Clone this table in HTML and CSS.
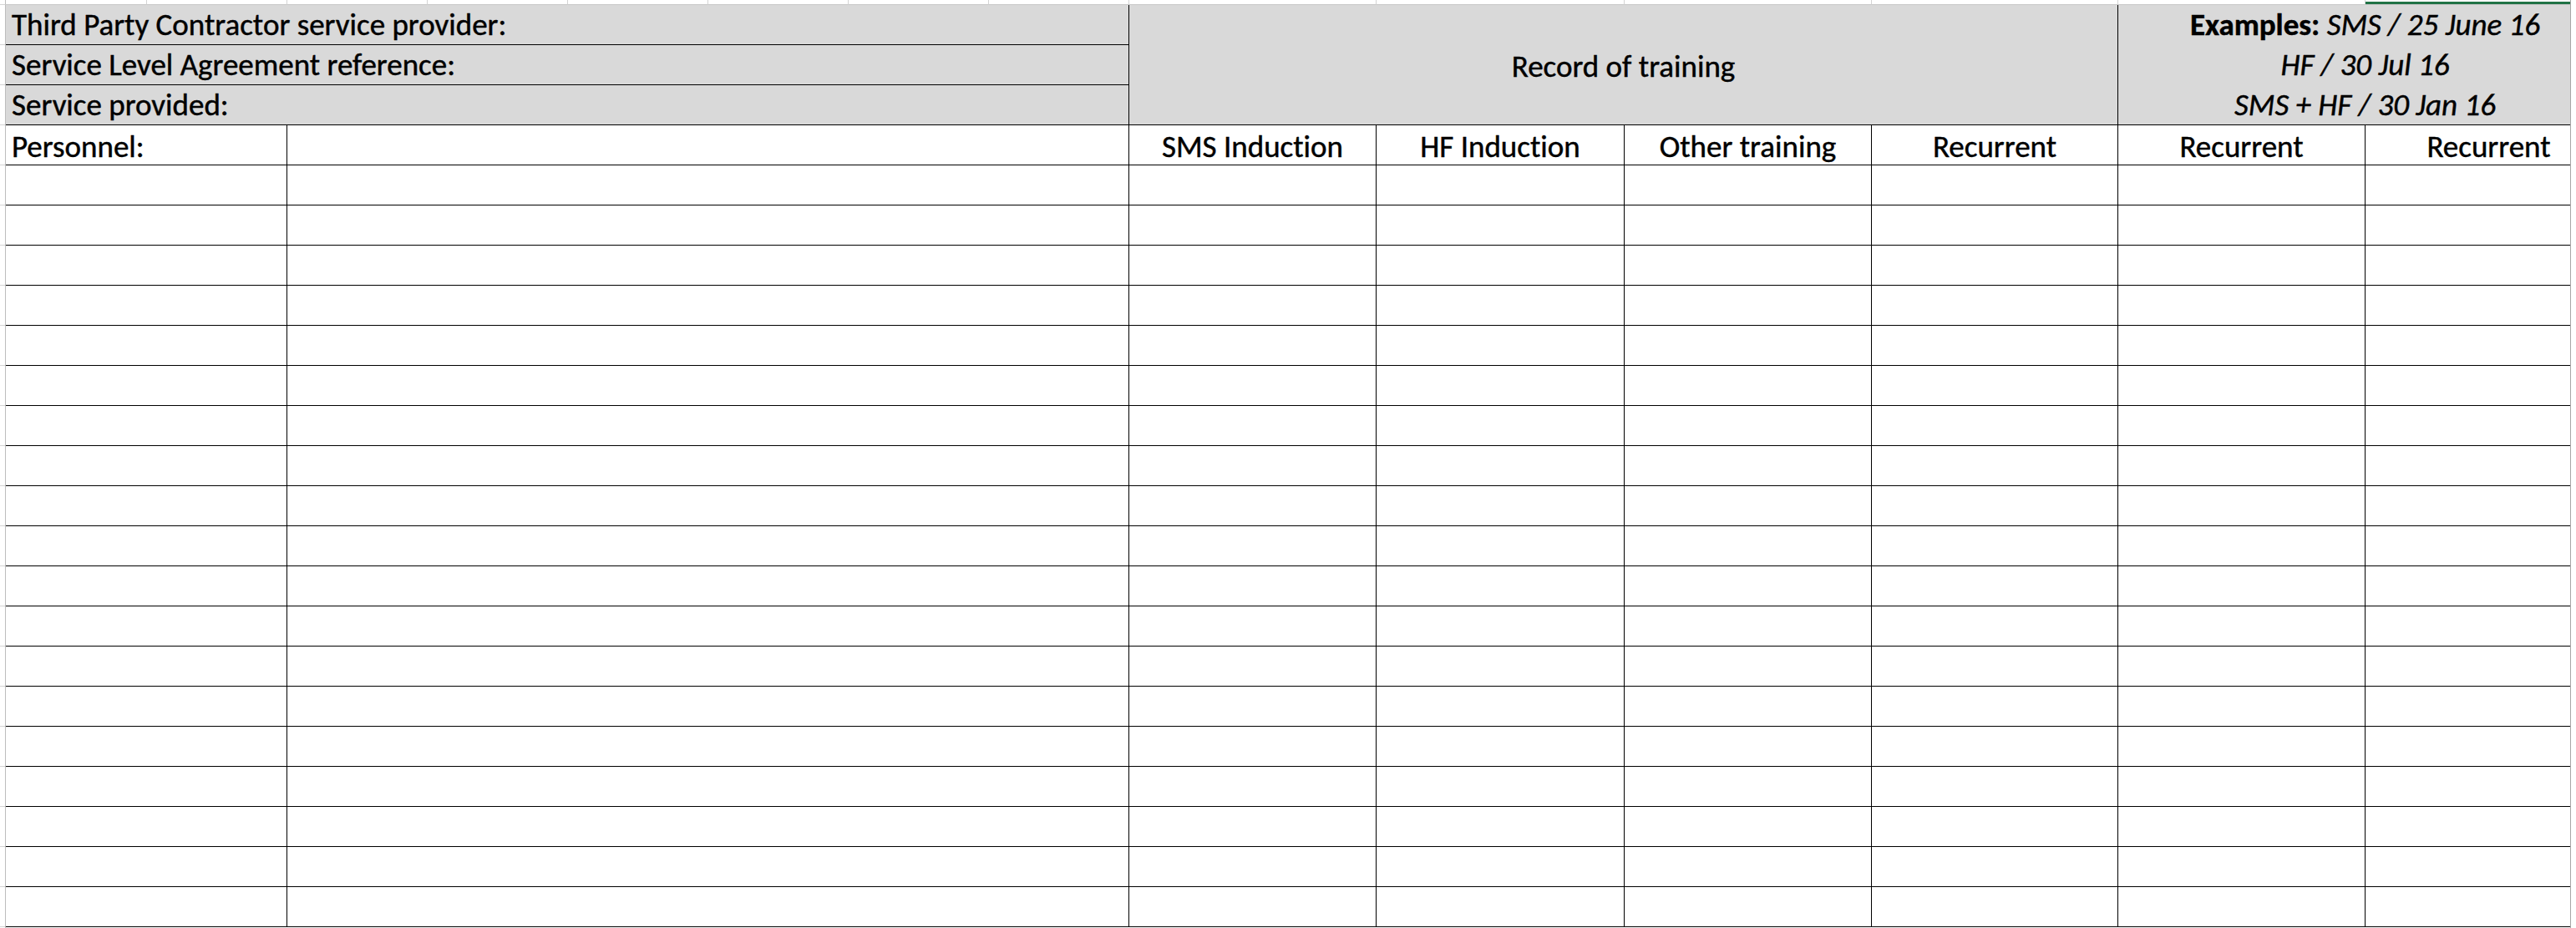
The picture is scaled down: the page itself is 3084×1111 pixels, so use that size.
FILE: index.html
```html
<!DOCTYPE html>
<html>
<head>
<meta charset="utf-8">
<link rel="stylesheet" href="styles.css">
</head>
<body>
<div class="screen">
  <div class="viewport">
    <div class="top-strip">
      <div class="ts gut"></div><div class="ts w169"></div><div class="ts w168"></div><div class="ts w168"></div><div class="ts w168"></div><div class="ts w168"></div><div class="ts w168"></div><div class="ts w168"></div><div class="ts w168"></div><div class="ts w296"></div><div class="ts w297"></div><div class="ts w296"></div><div class="ts w295"></div><div class="ts w296"></div><div class="ts w296 sel"></div>
    </div>
    <div class="main">
      <div class="gutter"></div>
      <div class="sheet">
        <div class="c lbl r1">Third Party Contractor service provider:</div>
        <div class="c lbl r2">Service Level Agreement reference:</div>
        <div class="c lbl r3">Service provided:</div>
        <div class="c record">Record of training</div>
        <div class="c examples">
          <div class="ex-line"><b>Examples:</b> <i>SMS / 25 June 16</i></div>
          <div class="ex-line"><i>HF / 30 Jul 16</i></div>
          <div class="ex-line"><i>SMS + HF / 30 Jan 16</i></div>
        </div>

        <div class="c head left">Personnel:</div>
        <div class="c head"></div>
        <div class="c head center">SMS Induction</div>
        <div class="c head center">HF Induction</div>
        <div class="c head center">Other training</div>
        <div class="c head center">Recurrent</div>
        <div class="c head center">Recurrent</div>
        <div class="c head center">Recurrent</div>

        <div class="c"></div><div class="c"></div><div class="c"></div><div class="c"></div><div class="c"></div><div class="c"></div><div class="c"></div><div class="c"></div>
        <div class="c"></div><div class="c"></div><div class="c"></div><div class="c"></div><div class="c"></div><div class="c"></div><div class="c"></div><div class="c"></div>
        <div class="c"></div><div class="c"></div><div class="c"></div><div class="c"></div><div class="c"></div><div class="c"></div><div class="c"></div><div class="c"></div>
        <div class="c"></div><div class="c"></div><div class="c"></div><div class="c"></div><div class="c"></div><div class="c"></div><div class="c"></div><div class="c"></div>
        <div class="c"></div><div class="c"></div><div class="c"></div><div class="c"></div><div class="c"></div><div class="c"></div><div class="c"></div><div class="c"></div>
        <div class="c"></div><div class="c"></div><div class="c"></div><div class="c"></div><div class="c"></div><div class="c"></div><div class="c"></div><div class="c"></div>
        <div class="c"></div><div class="c"></div><div class="c"></div><div class="c"></div><div class="c"></div><div class="c"></div><div class="c"></div><div class="c"></div>
        <div class="c"></div><div class="c"></div><div class="c"></div><div class="c"></div><div class="c"></div><div class="c"></div><div class="c"></div><div class="c"></div>
        <div class="c"></div><div class="c"></div><div class="c"></div><div class="c"></div><div class="c"></div><div class="c"></div><div class="c"></div><div class="c"></div>
        <div class="c"></div><div class="c"></div><div class="c"></div><div class="c"></div><div class="c"></div><div class="c"></div><div class="c"></div><div class="c"></div>
        <div class="c"></div><div class="c"></div><div class="c"></div><div class="c"></div><div class="c"></div><div class="c"></div><div class="c"></div><div class="c"></div>
        <div class="c"></div><div class="c"></div><div class="c"></div><div class="c"></div><div class="c"></div><div class="c"></div><div class="c"></div><div class="c"></div>
        <div class="c"></div><div class="c"></div><div class="c"></div><div class="c"></div><div class="c"></div><div class="c"></div><div class="c"></div><div class="c"></div>
        <div class="c"></div><div class="c"></div><div class="c"></div><div class="c"></div><div class="c"></div><div class="c"></div><div class="c"></div><div class="c"></div>
        <div class="c"></div><div class="c"></div><div class="c"></div><div class="c"></div><div class="c"></div><div class="c"></div><div class="c"></div><div class="c"></div>
        <div class="c"></div><div class="c"></div><div class="c"></div><div class="c"></div><div class="c"></div><div class="c"></div><div class="c"></div><div class="c"></div>
        <div class="c"></div><div class="c"></div><div class="c"></div><div class="c"></div><div class="c"></div><div class="c"></div><div class="c"></div><div class="c"></div>
        <div class="c"></div><div class="c"></div><div class="c"></div><div class="c"></div><div class="c"></div><div class="c"></div><div class="c"></div><div class="c"></div>
        <div class="c"></div><div class="c"></div><div class="c"></div><div class="c"></div><div class="c"></div><div class="c"></div><div class="c"></div><div class="c"></div>
      </div>
    </div>
  </div>
  <div class="edge"></div>
</div>
</body>
</html>
```

FILE: styles.css
```css
* {
  box-sizing: border-box;
  margin: 0;
  padding: 0;
}

html, body {
  width: 3084px;
  height: 1111px;
  overflow: hidden;
  background: #ffffff;
}

body {
  font-family: "Carlito", "Lato", "Liberation Sans", sans-serif;
  font-size: 37px;
  color: #000000;
  font-variant-ligatures: none;
  -webkit-text-stroke: 0.45px #000000;
}

.screen {
  display: flex;
  height: 1111px;
}

.viewport {
  width: 3077px;
  flex: none;
  overflow: hidden;
  display: flex;
  flex-direction: column;
}

.edge {
  flex: 1;
  border-left: 1px solid #a6a6a6;
  background: #ffffff;
}

/* strip of the excel grid above the table */
.top-strip {
  display: flex;
  height: 6px;
  flex: none;
}

.ts {
  flex: none;
  height: 6px;
  border-right: 1px solid #d4d4d4;
  border-bottom: 1px solid #c8c8c8;
}

.ts.gut { width: 7px; border-right-color: #bdbdbd; border-bottom-color: #d4d4d4; }
.w169 { width: 169px; }
.w168 { width: 168px; }
.w295 { width: 295px; }
.w296 { width: 296px; }
.w297 { width: 297px; }

.ts.sel {
  box-shadow: inset 0 -3px 0 #217346;
}

.main {
  display: flex;
  flex: 1;
}

.gutter {
  width: 7px;
  flex: none;
  border-right: 1px solid #bdbdbd;
  background: repeating-linear-gradient(to bottom, transparent 0 47px, #d4d4d4 47px 48px);
}

.sheet {
  display: grid;
  grid-template-columns: 337px 1008px 296px 297px 296px 295px 296px 296px;
  grid-auto-rows: 48px;
  flex: none;
}

.c {
  border-right: 1px solid #000000;
  border-bottom: 1px solid #000000;
  line-height: 47px;
  white-space: nowrap;
}

.lbl {
  grid-column: 1 / 3;
  background: #d9d9d9;
  padding-left: 7px;
  padding-top: 2px;
  line-height: 43px;
}

.r1 { grid-row: 1; }
.r2 { grid-row: 2; }
.r3 { grid-row: 3; }

.record {
  grid-column: 3 / 7;
  grid-row: 1 / 4;
  background: #d9d9d9;
  display: flex;
  align-items: center;
  justify-content: center;
  padding-top: 3px;
}

.examples {
  grid-column: 7 / 9;
  grid-row: 1 / 4;
  background: #d9d9d9;
  display: flex;
  flex-direction: column;
  align-items: center;
}

.ex-line {
  height: 47px;
  line-height: 47px;
  flex: none;
}

.ex-line + .ex-line {
  margin-top: 1px;
}

.ex-line b { font-weight: bold; }

.head {
  background: #ffffff;
  padding-top: 6px;
  line-height: 39px;
}

.head.left { padding-left: 7px; }
.head.center { text-align: center; }
```
